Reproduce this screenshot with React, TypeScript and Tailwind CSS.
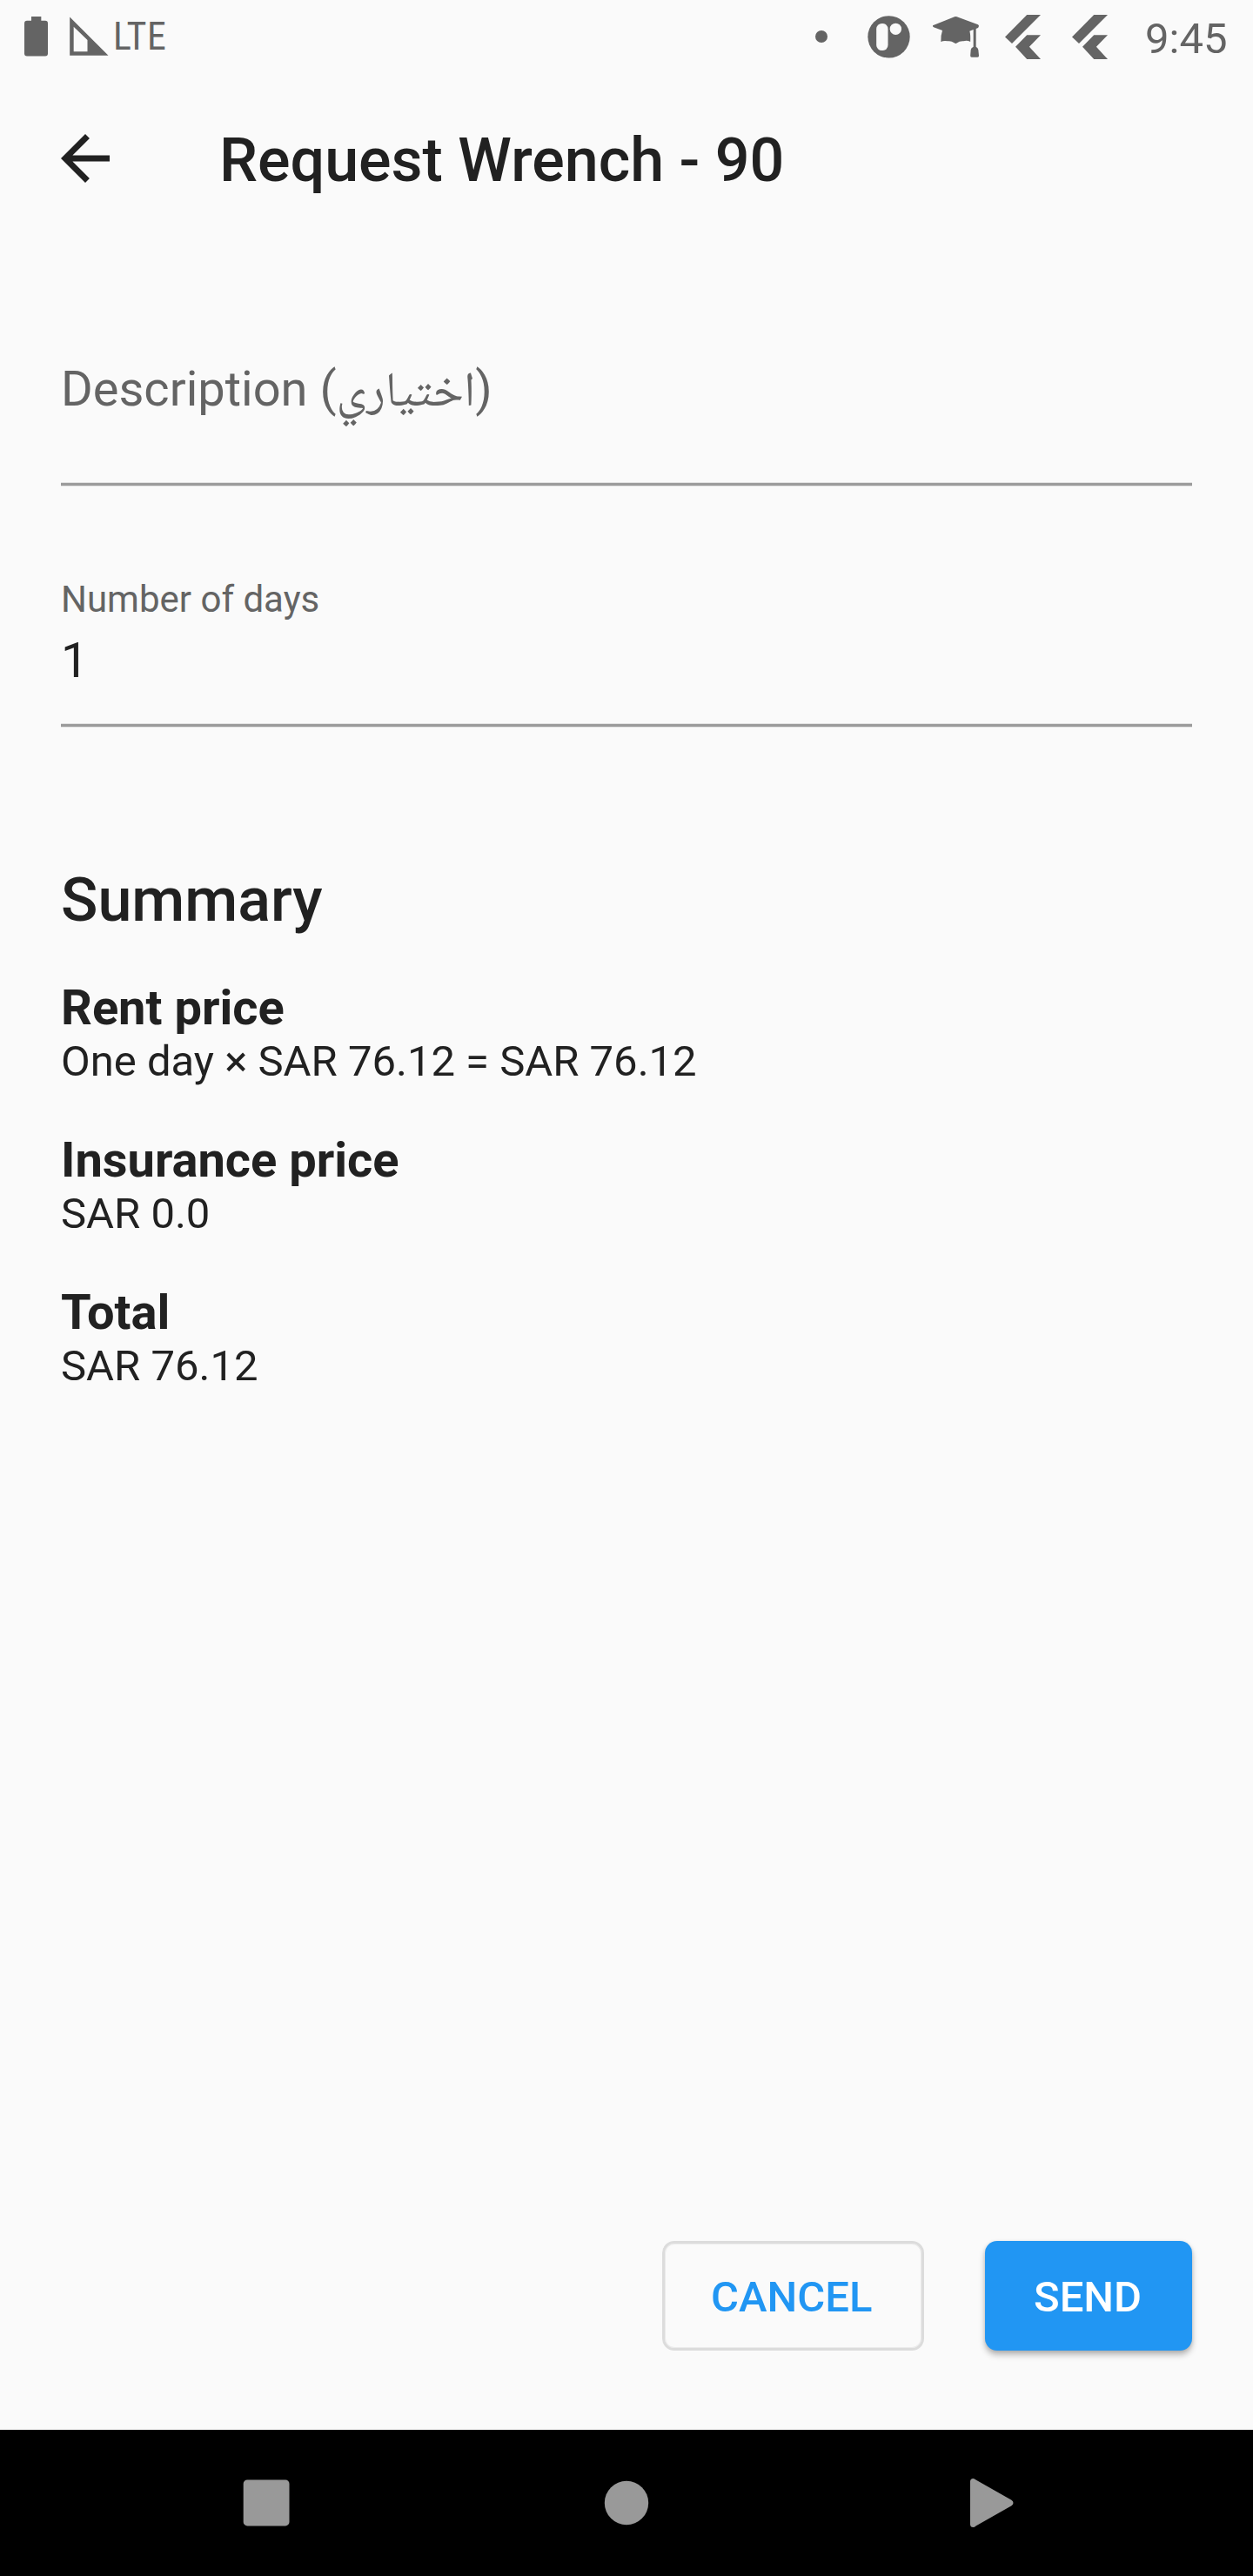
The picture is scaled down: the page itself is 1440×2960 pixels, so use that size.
import React from "react";

function BatteryIcon() {
  return (
    <svg viewBox="84 57 81 138" className="ml-[28px] mt-[19px] h-[46px] w-[27px]" fill="#646464">
      <rect x="108" y="57" width="34" height="18" />
      <rect x="84" y="71" width="81" height="122.5" rx="9" />
    </svg>
  );
}

function SignalIcon() {
  return (
    <svg viewBox="240 57 135 135" className="ml-[25px] mt-[19px] h-[45px] w-[45px]" fill="#646464">
      <path fillRule="evenodd" d="M240.5 58.5L373.5 191H240.5ZM254 92V178H301.500V138Z" />
    </svg>
  );
}

function BadgeIcon() {
  return (
    <svg viewBox="18 21 150 150" className="ml-[45px] mt-[17px] h-[50px] w-[50px]">
      <circle cx="94.500" cy="97" r="72.500" fill="#646464" />
      <rect x="51.500" y="51" width="40" height="93" rx="19" fill="#fafafa" />
      <circle cx="118" cy="70" r="20" fill="#fafafa" />
    </svg>
  );
}

function GraduationIcon() {
  return (
    <svg viewBox="243 24 165 144" className="ml-[25px] mt-[18px] h-[48px] w-[55px]" fill="#646464">
      <path d="M246 58L321 27.500Q325 26 329 27.500L402 55Q407 58 404 63L402 66L395 69V131Q402 134 403 142L405 161Q406 167 400 167H380Q375 167 375.500 161L377 142Q378 134 386 131V72L373 77Q376.500 88 375.500 114Q364 108 352 112Q338 111 330 118Q325 122 320 118Q309 110 298 112Q284 109 274 114Q273 92 279 75L249 64Q244 61 246 58Z" />
    </svg>
  );
}

function FlutterIcon({ className }: { className: string }) {
  return (
    <svg viewBox="0 0 41 51" className={className} fill="#646464">
      <path d="M25.2 0H41L8 33 0 25.400Z" />
      <path d="M25.2 23.300H41L27.900 36.700 41 51H25.200L12 36.700Z" />
    </svg>
  );
}

function StatusBar() {
  return (
    <div className="flex h-[84px] items-start text-[#646464]">
      <BatteryIcon />
      <SignalIcon />
      <span className="mt-[16px] ml-[5px] text-[44px] leading-[52px] tracking-[0.6px] [font-family:'Roboto_Condensed',Roboto,sans-serif]">
        LTE
      </span>
      <div className="ml-auto flex items-start">
        <span className="mt-[35px] size-[14px] rounded-full bg-[#646464]" />
        <BadgeIcon />
        <GraduationIcon />
        <FlutterIcon className="ml-[29px] mt-[17px] h-[51px] w-[41px]" />
        <FlutterIcon className="ml-[36px] mt-[17px] h-[51px] w-[41px]" />
        <span className="mt-[16px] ml-[43px] w-[124px] text-[49px] leading-[57px]">9:45</span>
      </div>
    </div>
  );
}

function AppBar() {
  return (
    <header className="flex h-[196px] items-start pl-[56px]">
      <button aria-label="Back" className="mt-[56px]">
        <svg viewBox="0 0 24 24" className="size-[84px]" fill="#212121">
          <path d="M20 11H7.830l5.590-5.590L12 4l-8 8 8 8 1.410-1.410L7.830 13H20v-2z" />
        </svg>
      </button>
      <h1 className="mt-[59px] ml-[112px] text-[70px] leading-[82px] font-medium">Request Wrench - 90</h1>
    </header>
  );
}

function Underline() {
  return <div className="h-[5px] border-y border-[#e2e2e2] bg-[#9b9b9b]" />;
}

function SummaryItem({ label, value }: { label: string; value: string }) {
  return (
    <div>
      <div className="text-[56px] leading-[66px] font-bold">{label}</div>
      <div className="text-[49px] leading-[57px]">{value}</div>
    </div>
  );
}

function NavBar() {
  return (
    <nav className="flex h-[168px] items-center bg-black">
      <svg viewBox="0 0 54 54" className="ml-[279px] size-[54px]" fill="#999999">
        <rect x="0.700" y="0.400" width="52.800" height="53" rx="4.500" />
      </svg>
      <svg viewBox="0 0 52 52" className="ml-[361px] size-[52px]" fill="#999999">
        <circle cx="26" cy="26" r="25.200" />
      </svg>
      <svg viewBox="0 0 50 56" className="ml-[369px] h-[56px] w-[50px]" fill="#999999">
        <path d="M0 3.500Q0 0 3.500 0Q5 0 6.500 1.500L47.500 24.800Q49.500 26.200 49.500 28T47.500 31.200L6.500 54.500Q5 56 3.500 56Q0 56 0 52.500Z" />
      </svg>
    </nav>
  );
}

export default function App() {
  return (
    <div className="flex h-[2960px] w-[1440px] flex-col bg-[#fafafa] text-[#212121] [font-family:Roboto,'Noto_Naskh_Arabic',sans-serif]">
      <StatusBar />
      <AppBar />
      <main className="flex flex-1 flex-col px-[70px] pt-[134px]">
        <div className="h-[66px] text-[56px] leading-[66px] text-[#646464]">Description (اختياري)</div>
        <div className="mt-[74px]">
          <Underline />
        </div>
        <div className="mt-[105px] text-[42px] leading-[49px] text-[#646464]">Number of days</div>
        <div className="mt-[13px] mb-[39px] text-[56px] leading-[66px]">1</div>
        <Underline />
        <h2 className="mt-[157px] mb-[50px] text-[70px] leading-[82px] font-medium">Summary</h2>
        <div className="flex flex-col gap-[52px]">
          <SummaryItem label="Rent price" value="One day × SAR 76.12 = SAR 76.12" />
          <SummaryItem label="Insurance price" value="SAR 0.0" />
          <SummaryItem label="Total" value="SAR 76.12" />
        </div>
        <div className="mt-auto mb-[91px] flex justify-end gap-[70px] text-[49px] leading-[57px] font-medium">
          <button className="flex h-[126px] w-[301px] items-start rounded-[14px] border-[3px] border-[#dcdcdc] pt-[33px] pl-[53px] text-[#2196f3] shadow-[inset_0_0_0_1px_#ebebeb]">
            CANCEL
          </button>
          <button className="flex h-[126px] w-[238px] items-start rounded-[14px] bg-[#2196f3] pt-[36px] pl-[56px] text-white shadow-[0_5px_7px_rgba(0,0,0,0.26),0_1px_4px_rgba(0,0,0,0.1)]">
            SEND
          </button>
        </div>
      </main>
      <NavBar />
    </div>
  );
}
